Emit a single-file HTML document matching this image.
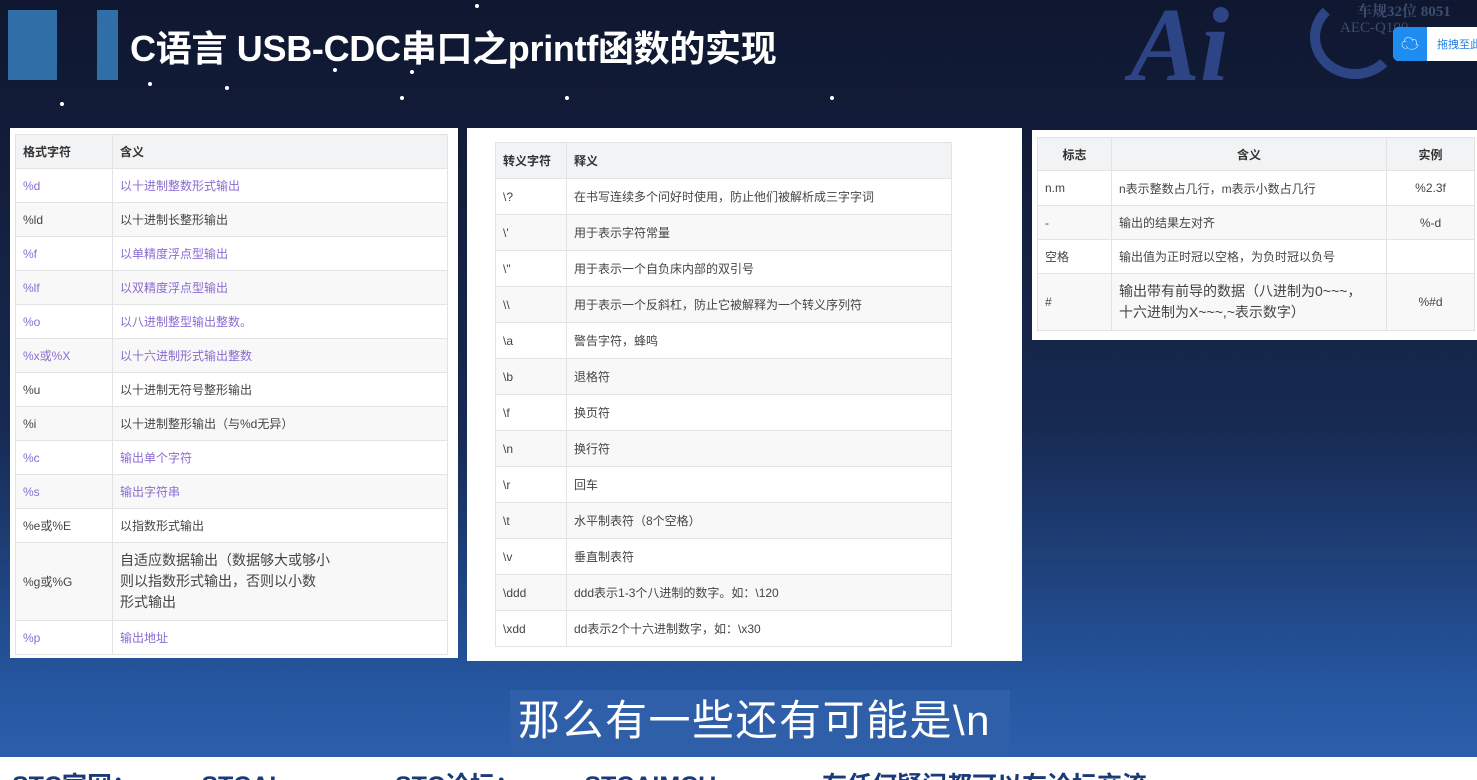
<!DOCTYPE html>
<html><head><meta charset="utf-8"><style>
*{margin:0;padding:0;box-sizing:border-box}
body{width:1477px;height:780px;overflow:hidden;position:relative;font-family:"Liberation Sans","Noto Sans CJK SC",sans-serif;
background:linear-gradient(180deg,#0f1730 0%,#131d3a 20%,#172a52 55%,#2556a0 88%,#2b5fab 96%);}
.abs{position:absolute}
.panel{position:absolute;background:#fff}
table{position:absolute;border-collapse:collapse;font-size:12px;color:#444;table-layout:fixed}
td,th{border:1px solid #e3e3e3;padding:0 7px;text-align:left;font-weight:normal;vertical-align:middle}
th{background:#f2f3f4;color:#333;font-weight:bold}
tr:nth-child(odd) td{background:#f8f8f8}
.p{color:#8a6bd0}
.c{text-align:center}
.star{position:absolute;width:4px;height:4px;border-radius:50%;background:#fff}
.ft{position:absolute;top:9px;font-size:25px;font-weight:bold;color:#1b3a78;white-space:nowrap}
</style></head><body>
<div class="abs" style="left:8px;top:10px;width:49px;height:70px;background:#2f6ea6"></div>
<div class="abs" style="left:97px;top:10px;width:21px;height:70px;background:#2f6ea6"></div>
<div class="abs" style="left:130px;top:20px;color:#fff;font-size:36px;font-weight:bold;letter-spacing:-0.3px;white-space:nowrap">C语言 USB-CDC串口之printf函数的实现</div>
<div class="abs" style="left:1130px;top:-8px;color:#2d4584;font-family:'Liberation Serif',serif;font-style:italic;font-weight:bold;font-size:105px;line-height:105px">Ai</div>
<div class="abs" style="left:1310px;top:-5px;width:90px;height:84px;border:10px solid #2d4584;border-radius:50%;border-right-color:transparent;border-top-color:transparent"></div>
<div class="abs" style="left:1357px;top:0;color:#3d4c70;font-family:'Liberation Serif','Noto Serif CJK SC',serif;font-weight:bold;font-size:15px;white-space:nowrap">车规32位 8051</div>
<div class="abs" style="left:1340px;top:20px;color:#3d4c70;font-family:'Liberation Serif',serif;font-size:15px;white-space:nowrap">AEC-Q100</div>
<div class="abs" style="left:1393px;top:27px;width:90px;height:34px;background:#fff;border-radius:6px;overflow:hidden">
<div style="width:34px;height:34px;background:#1e8cf0;border-radius:6px 0 0 6px;color:#fff;text-align:center;line-height:34px;font-size:18px">☁</div>
<div style="position:absolute;left:44px;top:9px;font-size:11px;color:#1e7fe0;white-space:nowrap">拖拽至此</div></div>
<div class="star" style="left:60px;top:102px"></div><div class="star" style="left:225px;top:86px"></div><div class="star" style="left:333px;top:68px"></div><div class="star" style="left:400px;top:96px"></div><div class="star" style="left:565px;top:96px"></div><div class="star" style="left:830px;top:96px"></div><div class="star" style="left:148px;top:82px"></div><div class="star" style="left:475px;top:4px"></div><div class="star" style="left:410px;top:70px"></div>

<div class="panel" style="left:10px;top:128px;width:448px;height:530px"></div>
<table style="left:15px;top:134px;width:433px">
<colgroup><col style="width:97px"><col></colgroup>
<tr style="height:34px"><th>格式字符</th><th>含义</th></tr>
<tr style="height:34px"><td class="p">%d</td><td class="p">以十进制整数形式输出</td></tr>
<tr style="height:34px"><td>%ld</td><td>以十进制长整形输出</td></tr>
<tr style="height:34px"><td class="p">%f</td><td class="p">以单精度浮点型输出</td></tr>
<tr style="height:34px"><td class="p">%lf</td><td class="p">以双精度浮点型输出</td></tr>
<tr style="height:34px"><td class="p">%o</td><td class="p">以八进制整型输出整数。</td></tr>
<tr style="height:34px"><td class="p">%x或%X</td><td class="p">以十六进制形式输出整数</td></tr>
<tr style="height:34px"><td>%u</td><td>以十进制无符号整形输出</td></tr>
<tr style="height:34px"><td>%i</td><td>以十进制整形输出（与%d无异）</td></tr>
<tr style="height:34px"><td class="p">%c</td><td class="p">输出单个字符</td></tr>
<tr style="height:34px"><td class="p">%s</td><td class="p">输出字符串</td></tr>
<tr style="height:34px"><td>%e或%E</td><td>以指数形式输出</td></tr>
<tr style="height:78px"><td>%g或%G</td><td style="font-size:14px;line-height:21px">自适应数据输出（数据够大或够小<br>则以指数形式输出，否则以小数<br>形式输出</td></tr>
<tr style="height:34px"><td class="p">%p</td><td class="p">输出地址</td></tr>
</table>

<div class="panel" style="left:467px;top:128px;width:555px;height:533px"></div>
<table style="left:495px;top:142px;width:457px">
<colgroup><col style="width:71px"><col></colgroup>
<tr style="height:36px"><th>转义字符</th><th>释义</th></tr>
<tr style="height:36px"><td>\?</td><td>在书写连续多个问好时使用，防止他们被解析成三字字词</td></tr>
<tr style="height:36px"><td>\'</td><td>用于表示字符常量</td></tr>
<tr style="height:36px"><td>\"</td><td>用于表示一个自负床内部的双引号</td></tr>
<tr style="height:36px"><td>\\</td><td>用于表示一个反斜杠，防止它被解释为一个转义序列符</td></tr>
<tr style="height:36px"><td>\a</td><td>警告字符，蜂鸣</td></tr>
<tr style="height:36px"><td>\b</td><td>退格符</td></tr>
<tr style="height:36px"><td>\f</td><td>换页符</td></tr>
<tr style="height:36px"><td>\n</td><td>换行符</td></tr>
<tr style="height:36px"><td>\r</td><td>回车</td></tr>
<tr style="height:36px"><td>\t</td><td>水平制表符（8个空格）</td></tr>
<tr style="height:36px"><td>\v</td><td>垂直制表符</td></tr>
<tr style="height:36px"><td>\ddd</td><td>ddd表示1-3个八进制的数字。如：\120</td></tr>
<tr style="height:36px"><td>\xdd</td><td>dd表示2个十六进制数字，如：\x30</td></tr>
</table>

<div class="panel" style="left:1032px;top:130px;width:445px;height:210px"></div>
<table style="left:1037px;top:137px;width:438px">
<colgroup><col style="width:74px"><col style="width:275px"><col></colgroup>
<tr style="height:33px"><th class="c">标志</th><th class="c">含义</th><th class="c">实例</th></tr>
<tr style="height:35px"><td>n.m</td><td>n表示整数占几行，m表示小数占几行</td><td class="c">%2.3f</td></tr>
<tr style="height:34px"><td>-</td><td>输出的结果左对齐</td><td class="c">%-d</td></tr>
<tr style="height:34px"><td>空格</td><td>输出值为正时冠以空格，为负时冠以负号</td><td></td></tr>
<tr style="height:57px"><td>#</td><td style="font-size:14px;line-height:21px">输出带有前导的数据（八进制为0~~~，<br>十六进制为X~~~,~表示数字）</td><td class="c">%#d</td></tr>
</table>

<div class="abs" style="left:510px;top:690px;width:500px;height:63px;background:#2f5fa8"></div>
<div class="abs" style="left:518px;top:694px;color:#fff;font-size:42px;line-height:54px;letter-spacing:1.5px;white-space:nowrap">那么有一些还有可能是\n</div>
<div class="abs" style="left:0;top:757px;width:1477px;height:23px;background:#fff;overflow:hidden">
<div class="ft" style="left:12px">STC官网：www.STCAI.com</div>
<div class="ft" style="left:395px">STC论坛：www.STCAIMCU.com</div>
<div class="ft" style="left:822px">有任何疑问都可以在论坛交流</div>
</div>
</body></html>
